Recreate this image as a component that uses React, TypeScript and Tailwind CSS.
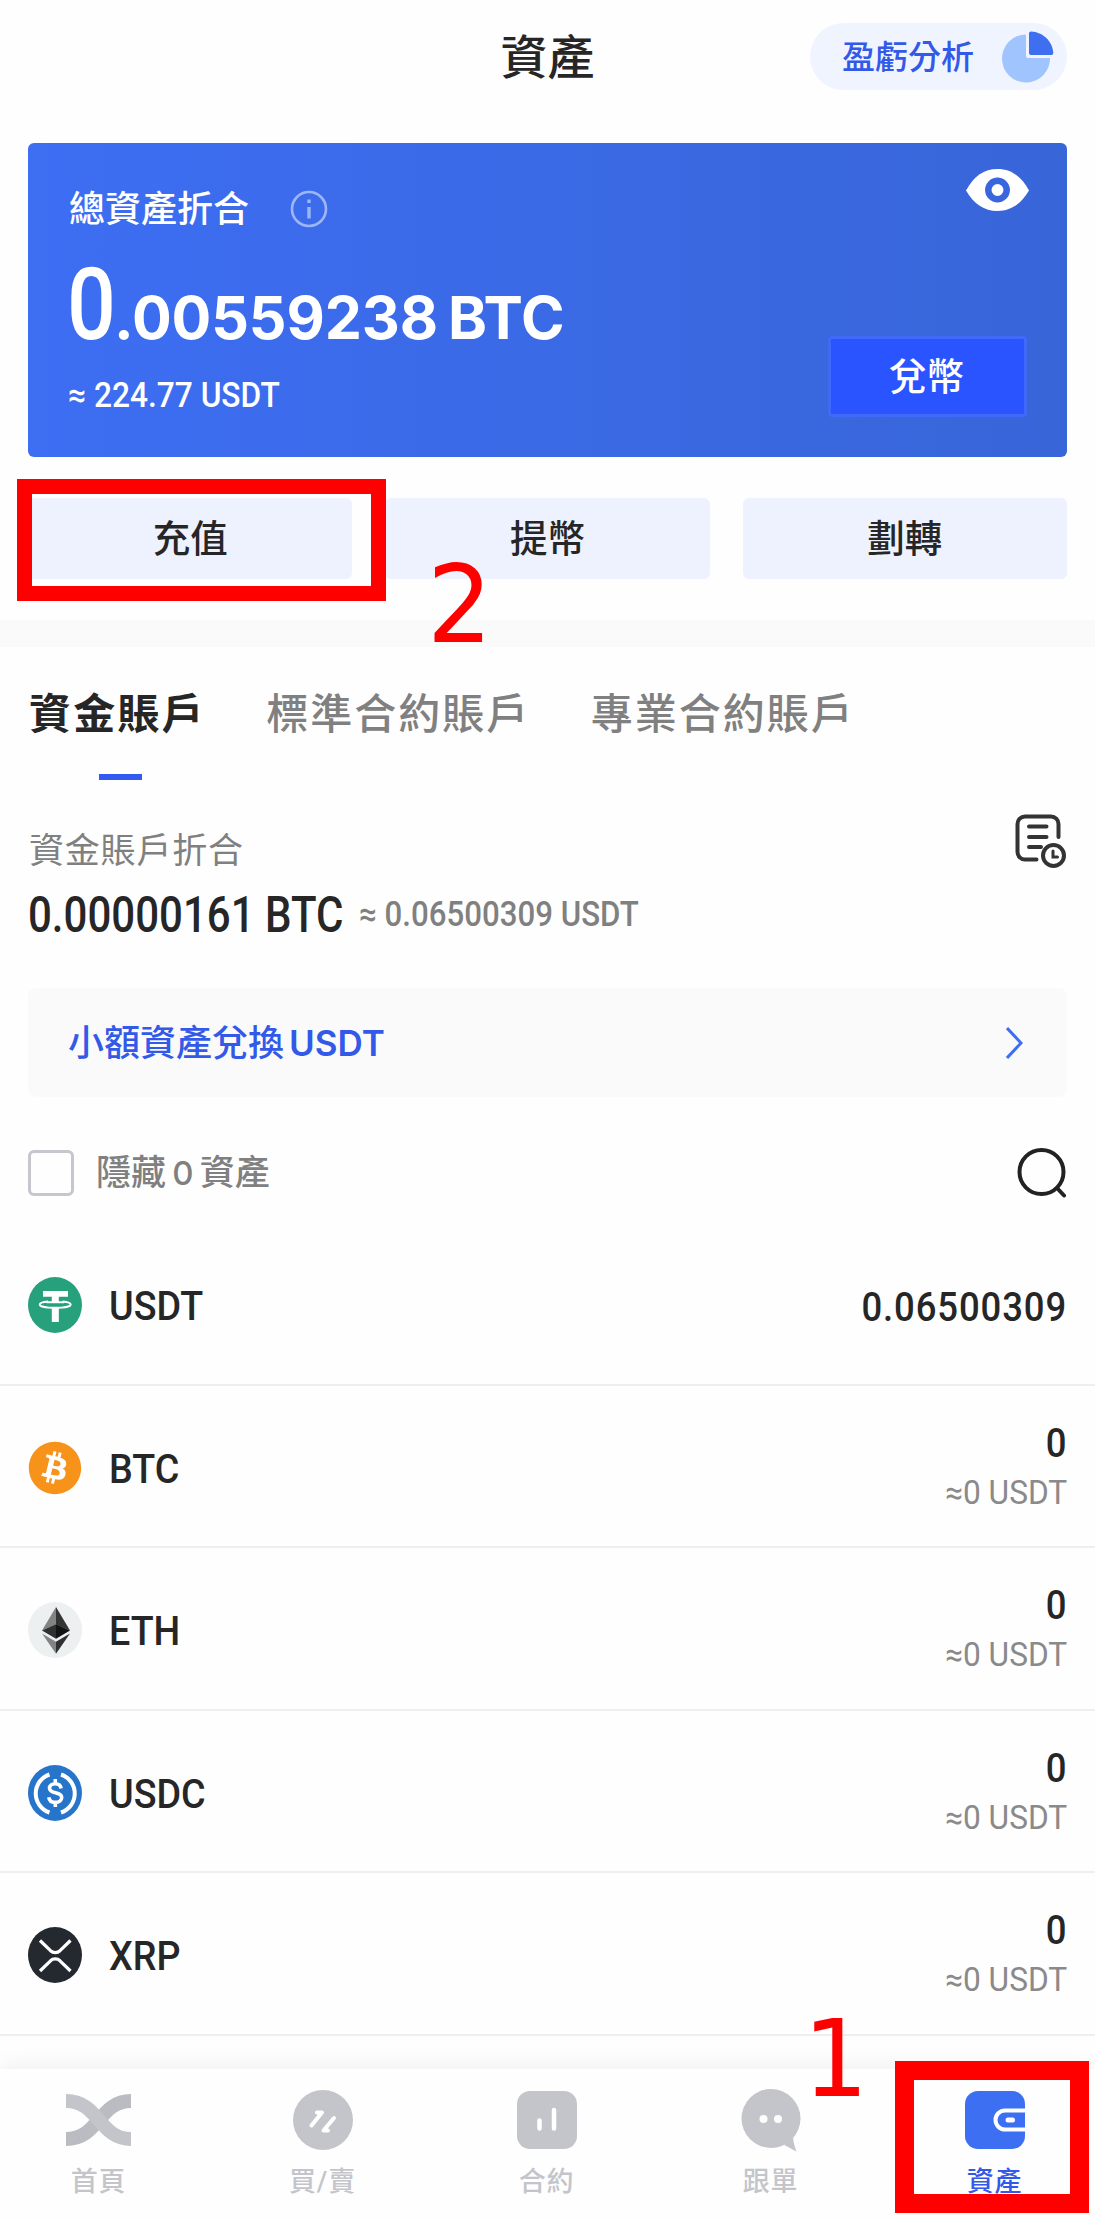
import type { ReactNode } from 'react';
import { FaBitcoin } from 'react-icons/fa';

const actions = ['充值', '提幣', '劃轉'];

const accountTabs = ['資金賬戶', '標準合約賬戶', '專業合約賬戶'];

function PieIcon() {
  return (
    <svg width="52" height="52" viewBox="0 0 52 52">
      <path d="M24 3.500A24 24 0 1 0 48 27H26a2 2 0 0 1-2-2Z" fill="#9fc4fe" />
      <path d="M27 2a2 2 0 0 1 2-1.600C41 1 50.500 10 51.300 22a2 2 0 0 1-2 2H29a2 2 0 0 1-2-2Z" fill="#3d6ff0" />
    </svg>
  );
}

function EyeIcon() {
  return (
    <svg width="63" height="42" viewBox="0 0 63 42">
      <path d="M0 21.500C8 7 18 0 31.500 0S55 7 63 21.500C55 35 45 42 31.500 42S8 35 0 21.500Z" fill="#fff" />
      <circle cx="31.500" cy="21" r="9.200" fill="#fff" stroke="#3966df" strokeWidth="6.500" />
    </svg>
  );
}

function InfoIcon() {
  return (
    <svg width="38" height="38" viewBox="0 0 38 38" stroke="#9db6f8" fill="none">
      <circle cx="19" cy="19" r="17" strokeWidth="2.600" />
      <path d="M19 17v11.500M19 9.500v3.500" strokeWidth="3.400" />
    </svg>
  );
}

function HistoryIcon() {
  return (
    <svg width="52" height="56" viewBox="0 0 52 56" fill="none" stroke="#333" strokeWidth="4" strokeLinecap="round">
      <path d="M21.500 45.500H10a7.500 7.500 0 0 1-7.500-7.500V10a7.500 7.500 0 0 1 7.500-7.500h26A7.500 7.500 0 0 1 43.500 10v13" />
      <path d="M14 12.500h17.500M14 23h17.500M14 33h12" />
      <circle cx="38.500" cy="41.500" r="10.500" />
      <path d="M38 37v6h4.500" strokeWidth="3" />
    </svg>
  );
}

function UsdtIcon() {
  return (
    <svg width="54" height="56" viewBox="0 0 54 56">
      <ellipse cx="27" cy="28" rx="27" ry="28" fill="#26a17b" />
      <path d="M15 14h25v5.800H15zM23.800 19h7v6.500h-7zM23.800 31h7v14h-7z" fill="#fff" />
      <path
        d="M20 24.500c-5 .5-8.300 1.500-8.300 2.900 0 2 7 3.400 15.500 3.400s15.500-1.400 15.500-3.400c0-1.400-3.300-2.400-8.200-2.900M18.500 25.300h17.500"
        fill="none"
        stroke="#fff"
        strokeWidth="1.900"
      />
    </svg>
  );
}

function BtcIcon() {
  return <FaBitcoin className="h-14 w-[54px] text-[#f7931a]" />;
}

function EthIcon() {
  return (
    <svg width="54" height="56" viewBox="0 0 54 56">
      <ellipse cx="27" cy="28" rx="27" ry="28" fill="#ecf0f1" />
      <path d="M28 5 14 28.500l14-6Z" fill="#828384" />
      <path d="m28 5 14 23.500-14-6Z" fill="#343434" />
      <path d="m14 28.500 14-6.200v14.500Z" fill="#2f3030" />
      <path d="m42 28.500-14-6.200v14.500Z" fill="#131313" />
      <path d="m14 31.500 14 8.200v12Z" fill="#828384" />
      <path d="m42 31.500-14 8.200v12Z" fill="#2f3030" />
    </svg>
  );
}

function UsdcIcon() {
  return (
    <svg width="54" height="56" viewBox="0 0 54 56" fill="none" stroke="#fff">
      <ellipse cx="27" cy="28" rx="27" ry="28" fill="#2775ca" stroke="none" />
      <path d="M21.500 9.500a20 20 0 0 0 0 38M33 9.500a20 20 0 0 1 0 38" strokeWidth="4" />
      <path
        d="M33 23.500c-.3-3.200-2.700-4.800-5.800-4.800-3.300 0-5.700 1.700-5.700 4.500 0 6.200 12.200 2.800 12.200 9.300 0 3-2.700 4.900-6.300 4.900-3.700 0-6.200-1.700-6.600-5.200M27.300 14v5M27.300 37v5"
        strokeWidth="3.600"
      />
    </svg>
  );
}

function XrpIcon() {
  return (
    <svg width="54" height="56" viewBox="0 0 54 56" fill="none" stroke="#fff" strokeWidth="3.200">
      <ellipse cx="27" cy="28" rx="27" ry="28" fill="#23292f" stroke="none" />
      <path d="m12 13.500 10.500 10.200a7 7 0 0 0 9.500 0L42.500 13.500M12 44l10.500-10.200a7 7 0 0 1 9.500 0L42.500 44" />
    </svg>
  );
}

const assets: { symbol: string; amount: string; value?: string; icon: ReactNode }[] = [
  { symbol: 'USDT', amount: '0.06500309', icon: <UsdtIcon /> },
  { symbol: 'BTC', amount: '0', value: '≈0 USDT', icon: <BtcIcon /> },
  { symbol: 'ETH', amount: '0', value: '≈0 USDT', icon: <EthIcon /> },
  { symbol: 'USDC', amount: '0', value: '≈0 USDT', icon: <UsdcIcon /> },
  { symbol: 'XRP', amount: '0', value: '≈0 USDT', icon: <XrpIcon /> },
];

const navItems: { label: string; icon: ReactNode }[] = [
  {
    label: '首頁',
    icon: (
      <svg width="65" height="52" viewBox="0 0 65 52" fill="none" strokeWidth="14">
        <path d="M65 7C33 7 33 45 0 45" stroke="#bbbcc2" />
        <path d="M0 7c33 0 33 38 65 38" stroke="#c4c5cb" />
      </svg>
    ),
  },
  {
    label: '買/賣',
    icon: (
      <svg width="60" height="60" viewBox="0 0 60 60">
        <circle cx="30" cy="30" r="30" fill="#c4c5cb" />
        <path d="M18.500 35.500 29 22.500h-5M41 28 30.500 40.500H35" fill="none" stroke="#fff" strokeWidth="4" strokeLinecap="round" strokeLinejoin="round" />
      </svg>
    ),
  },
  {
    label: '合約',
    icon: (
      <svg width="60" height="58" viewBox="0 0 60 58">
        <rect width="60" height="58" rx="13" fill="#c4c5cb" />
        <path d="M22.500 29.500v8M37 19v18.500" stroke="#fff" strokeWidth="4.500" strokeLinecap="round" />
      </svg>
    ),
  },
  {
    label: '跟單',
    icon: (
      <svg width="60" height="63" viewBox="0 0 60 63">
        <circle cx="30" cy="29.500" r="29.500" fill="#c4c5cb" />
        <path d="M52 48c.5 5 1.500 9.500 3.500 14.500-4-2-8-4.500-12.500-6.500Z" fill="#c4c5cb" />
        <circle cx="22.500" cy="30" r="4" fill="#fff" />
        <circle cx="37" cy="30" r="4" fill="#fff" />
      </svg>
    ),
  },
  {
    label: '資產',
    icon: (
      <svg width="60" height="58" viewBox="0 0 60 58">
        <rect width="60" height="58" rx="13" fill="#3d6ff3" />
        <path d="M60 19.500H40a9.500 9.500 0 0 0 0 19h20" fill="none" stroke="#fff" strokeWidth="4" />
        <path d="M43 29h4.500" stroke="#fff" strokeWidth="5" strokeLinecap="round" />
      </svg>
    ),
  },
];

export default function App() {
  return (
    <div className="relative flex h-[2218px] w-[1095px] flex-col overflow-hidden bg-[#fefefe] font-[Roboto,'Noto_Sans_CJK_TC',sans-serif] text-[#262626]">
      <header className="grid h-[143px] shrink-0 grid-cols-3 items-start px-7 pt-[23px]">
        <h1 className="col-start-2 pt-3 text-center text-[47px] leading-[46px] font-medium">資產</h1>
        <button className="flex h-[67px] w-[257px] items-center justify-between justify-self-end rounded-full bg-[#f0f4fe] pr-[13px] pl-8 text-[33px] font-medium text-[#3259e8]">
          <span className="pt-[3px]">盈虧分析</span>
          <PieIcon />
        </button>
      </header>

      <section className="mx-7 flex h-[314px] shrink-0 justify-between rounded-md bg-linear-to-r from-[#3d6ef3] to-[#3865d8] pr-10 pl-[41px] text-white">
        <div className="flex flex-col">
          <div className="mt-[46px] flex h-10 items-center gap-[41px] text-[36px] leading-10 font-medium">
            <span className="pt-px">總資產折合</span>
            <InfoIcon />
          </div>
          <p className="mt-[26px] flex h-[100px] items-baseline leading-[100px] whitespace-nowrap">
            <span className="-ml-0.5 w-[47px] origin-left scale-x-[0.86] text-[100px] font-medium">0</span>
            <span className="font-[Inter] text-[59px] font-bold tracking-[-0.1px] [word-spacing:-4px]">.00559238 BTC</span>
          </p>
          <p className="mt-[21px] -ml-px origin-left scale-x-[0.905] text-[35px] leading-10 font-medium whitespace-nowrap">≈ 224.77 USDT</p>
        </div>
        <div className="flex flex-col items-end">
          <div className="mt-[26px] -mr-0.5 h-[42px]">
            <EyeIcon />
          </div>
          <button className="mt-[125px] h-[81px] w-[199px] rounded-sm border-3 border-[#4069fa] bg-[#2954ff] pt-0.5 pr-0.5 text-[37.500px] leading-none font-medium">
            兌幣
          </button>
        </div>
      </section>

      <section className="grid h-[163px] shrink-0 grid-cols-3 gap-[33px] px-7 pt-[41px]">
        {actions.map((action) => (
          <button key={action} className="h-[81px] rounded-md bg-[#eef2fe] pt-[3px] text-[37.500px] leading-none font-medium">
            {action}
          </button>
        ))}
      </section>
      <div className="h-[27px] shrink-0 bg-[#fafafa]" />

      <nav className="flex h-[133px] shrink-0 gap-[60.500px] px-7 pt-[43px] text-[42px] leading-[50px] tracking-[2px] whitespace-nowrap">
        {accountTabs.map((tab, i) => (
          <div key={tab} className={`flex flex-col items-center ${i === 0 ? 'pl-px font-bold tracking-[2.200px]' : 'font-medium text-[#808080]'}`}>
            <span>{tab}</span>
            {i === 0 && <span className="mt-[34px] ml-1.5 h-1.5 w-[43px] bg-[#3259f0]" />}
          </div>
        ))}
      </nav>

      <section className="flex h-[208px] shrink-0 justify-between px-7 pt-[34px]">
        <div className="flex flex-col">
          <p className="mt-[18px] pl-px text-[35px] leading-10 tracking-[0.800px] text-[#808080]">資金賬戶折合</p>
          <div className="mt-[13px] flex items-center gap-3 leading-[60px] whitespace-nowrap">
            <span className="w-[319px] origin-left scale-x-[0.84] text-[50px] font-medium">0.00000161 BTC</span>
            <span className="origin-left scale-x-[0.892] text-[35px] font-medium text-[#808080]">≈ 0.06500309 USDT</span>
          </div>
        </div>
        <HistoryIcon />
      </section>

      <section className="mx-7 flex h-[109px] shrink-0 items-center justify-between rounded-lg bg-[#fafafa] pr-11 pl-10 text-[#3259e8]">
        <p className="pt-0.5 text-[36px] font-medium">
          小額資產兌換<span className="ml-[5px] font-[Inter] text-[35px] font-semibold">USDT</span>
        </p>
        <svg width="17" height="32" viewBox="0 0 17 32" fill="none" stroke="#3d6ff0" strokeWidth="3">
          <path d="m1 1 14 15L1 31" />
        </svg>
      </section>

      <section className="flex h-[126px] shrink-0 items-start justify-between px-7 pt-[51px]">
        <label className="flex h-[50px] items-center gap-[22px] text-[35px] font-medium text-[#808080]">
          <span className="size-[46px] rounded-md border-3 border-[#c5c6ce]" />
          <span className="pt-0.5 [word-spacing:-2.500px]">
            隱藏 <span className="font-[Inter] text-[33px]">0</span> 資產
          </span>
        </label>
        <svg width="50" height="50" viewBox="0 0 50 50" fill="none" stroke="#222" strokeWidth="4" strokeLinecap="round">
          <circle cx="24.500" cy="24" r="22" />
          <path d="m40 40 7 7.500" />
        </svg>
      </section>

      <ul>
        {assets.map(({ symbol, amount, value, icon }) => (
          <li key={symbol} className="flex h-[162.500px] items-center border-b-2 border-[#efefef] px-7 pt-1">
            {icon}
            <span className="ml-[27px] origin-left scale-x-[0.93] pt-0.5 text-[40.500px] leading-none font-medium">{symbol}</span>
            <div className={`ml-auto flex flex-col items-end ${value ? 'pt-px' : 'pt-[3px]'}`}>
              <span className="origin-right scale-x-[0.89] text-[41px] leading-[48px] font-medium tracking-[1px]">{amount}</span>
              {value && (
                <span className="origin-right scale-x-[0.96] pt-px text-[33px] leading-[50px] text-[#8a8a8a]">{value}</span>
              )}
            </div>
          </li>
        ))}
      </ul>

      <footer className="mt-auto flex h-[149px] shrink-0 justify-between bg-[#fefefe] pr-0.5 shadow-[0_-4px_20px_rgba(0,0,0,0.06)]">
        {navItems.map(({ label, icon }, i) => (
          <div key={label} className={`flex w-[197px] flex-col items-center text-[27px] font-medium ${i === 4 ? 'text-[#3259e8]' : 'text-[#c4c5cb]'}`}>
            <span className="mt-[19px] flex h-[64px] items-center">{icon}</span>
            <span className="mt-3 leading-[36px] tracking-[0.800px]">{label}</span>
          </div>
        ))}
      </footer>

      {/* step markers */}
      <div className="absolute top-[479px] left-[17px] h-[122px] w-[369px] border-15 border-[#fe0000]" />
      <span className="absolute top-[552px] left-[427px] origin-left scale-x-[0.96] font-['DejaVu_Sans'] text-[107px] leading-[107px] text-[#fe0000]">2</span>
      <div className="absolute top-[2061px] left-[895px] h-[152px] w-[194px] border-19 border-[#fe0000]" />
      <span className="absolute top-[2006px] left-[803px] origin-left scale-x-[0.96] font-['DejaVu_Sans'] text-[107px] leading-[107px] text-[#fe0000]">1</span>
    </div>
  );
}
